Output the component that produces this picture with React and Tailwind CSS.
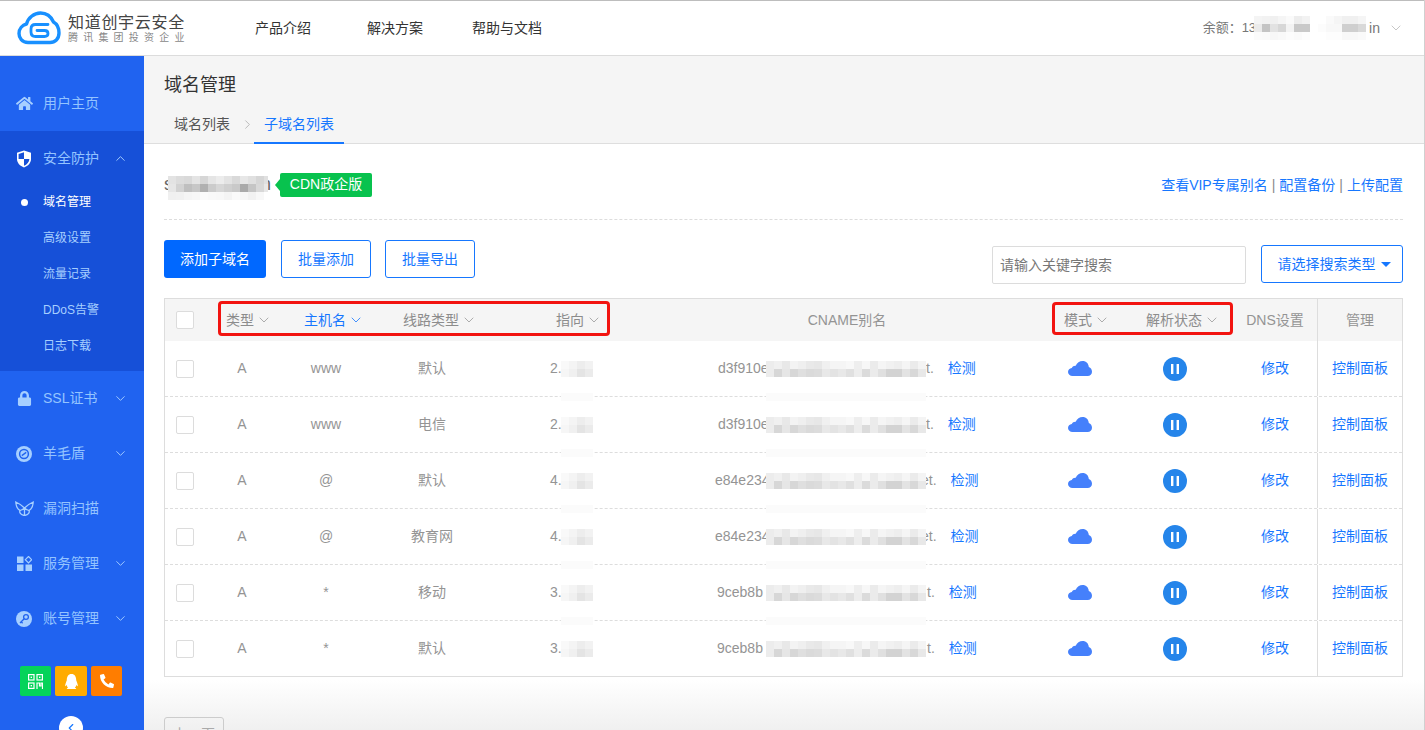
import { FaHome, FaLock, FaQq, FaPhoneAlt } from 'react-icons/fa';
import { ChevronDown, ChevronUp, ChevronLeft, ChevronRight } from 'lucide-react';

const font = { fontFamily: '"Liberation Sans", "Noto Sans CJK SC", sans-serif' };

const Logo = () => (
  <svg width="44" height="34" viewBox="0 0 44 34" fill="none" stroke="#1890ff" strokeWidth="3.4" strokeLinejoin="round" strokeLinecap="round">
    <path d="M11 31.5C5 31.5 2 27 2 22.5C2 17.5 5.5 14 9.5 13C11 7 17 2 23.5 2C30 2 34.5 6.5 36.5 11C40 13 42 17 42 22C42 28 38 31.5 33 31.5Z" />
    <path d="M31 13.5H18.5Q14 13.5 14 18V21Q14 25.5 18.5 25.5H27.5Q31 25.5 31 22.5Q31 19.5 27.5 19.5H20" strokeWidth="2.8" />
  </svg>
);

const Shield = () => (
  <svg width="16" height="18" viewBox="0 0 16 18">
    <path d="M8 0.5L15 2.8V9C15 13 12 16 8 17.5C4 16 1 13 1 9V2.8Z" fill="#ffffff" />
    <path d="M8 2.2V9H2.6V3.9ZM8 9H13.4C13.2 12 11 14.6 8 15.8Z" fill="#1650d8" />
  </svg>
);

const WoolShield = () => (
  <svg width="16" height="16" viewBox="0 0 16 16">
    <circle cx="8" cy="8" r="8" fill="#a6cfff" />
    <circle cx="8" cy="8" r="4.4" fill="none" stroke="#2063f0" strokeWidth="1.5" />
    <path d="M5.8 9.6L10.2 6.4" stroke="#2063f0" strokeWidth="1.3" />
  </svg>
);

const Wings = () => (
  <svg width="19" height="15" viewBox="0 0 19 15" fill="none" stroke="#a6cfff" strokeWidth="1.3">
    <path d="M0.8 1C3.5 2.2 6.5 4 9.5 7C12.5 4 15.5 2.2 18.2 1C18 5 16.5 8 14 9.5C15 11.5 13 14 9.5 14.5C6 14 4 11.5 5 9.5C2.5 8 1 5 0.8 1Z" />
    <path d="M5 9.5C7 8.8 8.5 8.2 9.5 7C10.5 8.2 12 8.8 14 9.5M9.5 7V14.5" />
  </svg>
);

const Apps = () => (
  <svg width="15" height="15" viewBox="0 0 15 15" fill="#a6cfff">
    <rect x="0" y="0.5" width="6.5" height="6.5" />
    <rect x="0" y="8.5" width="6.5" height="6.5" />
    <rect x="8.5" y="8.5" width="6.5" height="6.5" />
    <path d="M11.5 0.5L14.7 3.7L11.5 6.9L8.3 3.7Z" fill="none" stroke="#a6cfff" strokeWidth="1.2" />
  </svg>
);

const KeyIcon = () => (
  <svg width="16" height="16" viewBox="0 0 16 16">
    <circle cx="8" cy="8" r="8" fill="#a6cfff" />
    <circle cx="10" cy="6" r="2.4" fill="none" stroke="#2063f0" strokeWidth="1.3" />
    <path d="M8.2 7.8L4 12M5.2 10.8L6.6 12.2" stroke="#2063f0" strokeWidth="1.3" />
  </svg>
);

const QrIcon = () => (
  <svg width="15" height="15" viewBox="0 0 15 15" fill="none" stroke="#fff" strokeWidth="1.2">
    <rect x="0.6" y="0.6" width="5.4" height="5.4" />
    <rect x="9" y="0.6" width="5.4" height="5.4" />
    <rect x="0.6" y="9" width="5.4" height="5.4" />
    <path d="M9 15V9H11.5V12H13V9H14.5V15" />
    <rect x="2.6" y="2.6" width="1.4" height="1.4" fill="#fff" stroke="none" />
    <rect x="11" y="2.6" width="1.4" height="1.4" fill="#fff" stroke="none" />
    <rect x="2.6" y="11" width="1.4" height="1.4" fill="#fff" stroke="none" />
  </svg>
);

const Cloud = () => (
  <svg width="24" height="15" viewBox="0 0 24 15" fill="#4580fb">
    <path d="M4.5 15C2 15 0 13.3 0 11C0 8.8 1.6 7.2 3.8 7C4.6 5.3 6.1 4.6 7.7 4.8C9 2 11.6 0 14.6 0C18.2 0 20.6 2.6 20.8 6C22.8 6.8 24 8.6 24 10.8C24 13.2 22.2 15 19.6 15Z" />
  </svg>
);

const Pause = () => (
  <svg width="24" height="24" viewBox="0 0 24 24">
    <circle cx="12" cy="12" r="12" fill="#2585ea" />
    <rect x="8" y="7" width="2.4" height="10" fill="#fff" />
    <rect x="13.6" y="7" width="2.4" height="10" fill="#fff" />
  </svg>
);

// pixelated patch that hides a value in the screenshot
const Mosaic = ({ rows, width, faint }) => (
  <span className="relative inline-block align-middle" style={{ width }}>
    {rows.map((row, i) => (
      <span key={i} className="flex h-[8px] overflow-hidden">
        {row.map((c, j) => (
          <span key={j} className="h-[8px] w-[8px] shrink-0" style={{ backgroundColor: c }} />
        ))}
      </span>
    ))}
    {faint && <span className="absolute left-0 right-0 top-[32px] h-[8px] bg-[#fbfbfb]" />}
  </span>
);

const cnameRows = [
  ['#ececec','#f0f0f0','#e8e8e8','#f3f3f3','#efefef','#e9e9e9','#e7e7e7','#f0f0f0','#f5f5f5','#f5f5f5','#f8f8f8','#eeeeee','#f7f7f7','#ebebeb','#f5f5f5','#f1f1f1','#eeeeee','#f5f5f5','#ebebeb','#f4f4f4'],
  ['#ececec','#d7d7d7','#e6e6e6','#d7d7d7','#dfdfdf','#dadada','#dcdcdc','#e8e8e8','#e3e3e3','#e8e8e8','#e0e0e0','#ededed','#dbdbdb','#ebebeb','#e0e0e0','#d3d3d3','#d3d3d3','#e3e3e3','#d8d8d8','#e8e8e8'],
];
const ipRows = [
  ['#f9f9f9','#f4f4f4','#ededed','#f2f2f2'],
  ['#f6f6f6','#f0f0f0','#e4e4e4','#ebebeb'],
];
const domainRows = [
  ['#e3e3e3','#dcdcdc','#d9d9d9','#e4e4e4','#d6d6d6','#e5e5e5','#ececec','#e3e3e3','#d9d9d9','#e7e7e7','#e0e0e0','#d6d6d6','#e0e0e0'],
  ['#e6e6e6','#d2d2d2','#bfbfbf','#c7c7c7','#b0b0b0','#cbcbcb','#d6d6d6','#cfcfcf','#c9c9c9','#aaaaaa','#c5c5c5','#d8d8d8','#e8e8e8'],
  ['#f0f0f0','#f1f1f1','#f5f5f5','#f7f7f7','#fbfbfb','#f9f9f9','#f8f8f8','#f4f4f4','#fafafa','#f7f7f7','#f2f2f2','#f8f8f8','#ffffff'],
];
const balanceRows = [
  ['#f4f4f4','#f2f2f2','#f0f0f0','#f5f5f5','#fafafa','#ededed','#f2f2f2','#ffffff','#ffffff','#fafafa','#f5f5f5','#f0f0f0','#f0f0f0','#f5f5f5'],
  ['#ebebeb','#c4c4c4','#e2e2e2','#d7d7d7','#f3f3f3','#c9c9c9','#c9c9c9','#ffffff','#fcfcfc','#f8f8f8','#f8f8f8','#cfcfcf','#cfcfcf','#d9d9d9'],
  ['#fbfbfb','#fafafa','#f7f7f7','#f9f9f9','#fcfcfc','#fafafa','#fdfdfd','#ffffff','#ffffff','#fdfdfd','#fdfdfd','#f8f8f8','#f8f8f8','#fafafa'],
];

const groups = [
  { icon: <FaLock size={15} />, label: 'SSL证书', arrow: true },
  { icon: <WoolShield />, label: '羊毛盾', arrow: true },
  { icon: <Wings />, label: '漏洞扫描' },
  { icon: <Apps />, label: '服务管理', arrow: true },
  { icon: <KeyIcon />, label: '账号管理', arrow: true },
];

const subMenu = ['域名管理', '高级设置', '流量记录', 'DDoS告警', '日志下载'];

const rows = [
  { host: 'www', line: '默认', ip: '2.', prefix: 'd3f910e', pre: 'pl-[58px]', preW: 'w-[48px]', suffix: 't.', post: '' },
  { host: 'www', line: '电信', ip: '2.', prefix: 'd3f910e', pre: 'pl-[58px]', preW: 'w-[48px]', suffix: 't.', post: '' },
  { host: '@', line: '默认', ip: '4.', prefix: 'e84e234', pre: 'pl-[55px]', preW: 'w-[51px]', suffix: 'et.', post: '-ml-[5px]' },
  { host: '@', line: '教育网', ip: '4.', prefix: 'e84e234', pre: 'pl-[55px]', preW: 'w-[51px]', suffix: 'et.', post: '-ml-[5px]' },
  { host: '*', line: '移动', ip: '3.', prefix: '9ceb8b', pre: 'pl-[57px]', preW: 'w-[49px]', suffix: 't.', post: 'ml-[1px]' },
  { host: '*', line: '默认', ip: '3.', prefix: '9ceb8b', pre: 'pl-[57px]', preW: 'w-[49px]', suffix: 't.', post: 'ml-[1px]' },
];

const gridCols = 'grid grid-cols-[51px_52px_116px_96px_180px_374px_92px_107px_84px_85px]';

const Box = () => <span className="block h-[18px] w-[18px] rounded-[2px] border border-[#dcdcdc] bg-white" />;

const SortLabel = ({ children, active, className }) => (
  <div className={`flex items-center whitespace-nowrap text-[14px] ${active ? 'text-[#1677ff]' : 'text-[#8c8c8c]'} ${className}`}>
    <span>{children}</span>
    <ChevronDown size={16} strokeWidth={1.2} className={`ml-[2px] shrink-0 ${active ? 'text-[#1677ff]' : 'text-[#999]'}`} />
  </div>
);

const NavItem = ({ icon, label, arrow }) => (
  <div className="flex h-[55px] items-center text-[14px] text-[#94c4ff]">
    <span className="flex w-[43px] shrink-0 justify-center pl-[7px] pr-[2px] text-[#a6cfff]">{icon}</span>
    <span className="w-[66px]">{label}</span>
    {arrow && <ChevronDown size={15} strokeWidth={1.5} className="ml-[4px] text-[#a6cfff]" />}
  </div>
);

export default function App() {
  return (
    <div className="relative flex h-[730px] w-[1425px] flex-col overflow-hidden border-r border-[#d0d0d0] bg-white" style={font}>
      <header className="flex h-[56px] shrink-0 items-center border-b border-t border-b-[#dcdcdc] border-t-[#bdbdbd] bg-white">
        <div className="ml-[17px] flex w-[238px] items-center">
          <Logo />
          <div className="ml-[7px] flex flex-col">
            <span className="text-[16px] leading-[18px] tracking-[0.7px] text-[#444]">知道创宇云安全</span>
            <span className="text-[10px] leading-[11px] tracking-[5.2px] whitespace-nowrap text-[#888]">腾讯集团投资企业</span>
          </div>
        </div>
        <nav className="flex text-[14px] text-[#333]">
          <a className="w-[112px]">产品介绍</a>
          <a className="w-[105px]">解决方案</a>
          <a>帮助与文档</a>
        </nav>
        <div className="ml-auto flex items-center pr-[20px] text-[13px] text-[#777]">
          <span>余额：13</span>
          <span className="-ml-[2px]"><Mosaic rows={balanceRows} width={112} /></span>
          <span className="relative ml-[3px] text-[14px]">in</span>
          <ChevronDown size={16} strokeWidth={1} className="ml-[8px] text-[#aaa]" />
        </div>
      </header>

      <div className="flex min-h-0 flex-1">
        <aside className="w-[144px] shrink-0 overflow-hidden bg-[#2063f0]">
          <div className="pt-[20px]">
            <NavItem icon={<FaHome size={17} />} label="用户主页" />
          </div>
          <div className="h-[240px] bg-[#1650d8]">
            <div className="flex h-[53px] items-center pt-[2px] text-[14px] text-[#94c4ff]">
              <span className="flex w-[43px] shrink-0 justify-center pl-[7px] pr-[2px]"><Shield /></span>
              <span className="w-[66px]">安全防护</span>
              <ChevronUp size={15} strokeWidth={1.5} className="ml-[4px] text-[#a6cfff]" />
            </div>
            {subMenu.map((item, i) => (
              <div key={item} className={`flex h-[36px] items-center text-[12px] ${i === 0 ? 'text-white' : 'text-[#a6cfff]'}`}>
                <span className="flex w-[43px] justify-center pl-[5px]">
                  {i === 0 && <span className="h-[7px] w-[7px] rounded-full bg-white" />}
                </span>
                {item}
              </div>
            ))}
          </div>
          {groups.map((g) => (
            <NavItem key={g.label} {...g} />
          ))}
          <div className="mt-[20px] flex pl-[20px]">
            <span className="flex h-[30px] w-[31px] items-center justify-center rounded-[2px] bg-[#05d35a]"><QrIcon /></span>
            <span className="ml-[4px] flex h-[30px] w-[32px] items-center justify-center rounded-[2px] bg-[#ffab00] text-white"><FaQq size={15} /></span>
            <span className="ml-[4px] flex h-[30px] w-[31px] items-center justify-center rounded-[2px] bg-[#ff7d00] text-white"><FaPhoneAlt size={14} /></span>
          </div>
          <div className="mt-[20px] flex justify-center pr-[2px]">
            <span className="flex h-[24px] w-[24px] items-center justify-center rounded-full bg-white text-[#1677ff]"><ChevronLeft size={14} /></span>
          </div>
        </aside>

        <main className="relative min-w-0 flex-1 overflow-hidden">
          <div className="h-[88px] border-b border-[#dedede] bg-[#f5f5f5] pl-[20px]">
            <h1 className="pt-[17px] text-[18px] leading-[24px] text-[#333]">域名管理</h1>
            <div className="mt-[13px] flex h-[34px] text-[14px]">
              <span className="ml-[10px] flex h-[34px] items-center pb-[6px] text-[#555]">域名列表</span>
              <span className="ml-[10px] flex h-[34px] items-center pb-[6px]"><ChevronRight size={15} strokeWidth={1} className="text-[#999]" /></span>
              <span className="relative ml-[-1px] flex h-[34px] w-[90px] items-center justify-center pb-[6px] text-[#1677ff]">
                子域名列表
                <span className="absolute bottom-0 left-0 h-[2px] w-full bg-[#1677ff]" />
              </span>
            </div>
          </div>

          <div className="px-[20px] pr-[21px]">
            <div className="flex h-[76px] items-center border-b border-dashed border-[#dddddd] pt-[6px]">
              <span className="text-[18px] text-[#666]">s</span>
              <span className="relative z-10 -ml-[5px] mt-[6px] w-[100px] overflow-hidden"><Mosaic rows={domainRows} width={104} /></span>
              <span className="-ml-[7px] text-[18px] text-[#666]">n</span>
              <span className="ml-[4px] h-0 w-0 border-b-[6px] border-r-[5px] border-t-[6px] border-b-transparent border-r-[#08c24e] border-t-transparent" />
              <span className="flex h-[24px] w-[92px] items-center justify-center rounded-[2px] bg-[#08c24e] text-[14px] text-white">CDN政企版</span>
              <div className="ml-auto mt-[1px] text-[14px] text-[#1677ff]">
                查看VIP专属别名<span className="mx-[4px] text-[#888]">|</span>配置备份<span className="mx-[4px] text-[#888]">|</span>上传配置
              </div>
            </div>

            <div className="mt-[20px] flex items-start text-[14px]">
              <button className="h-[38px] w-[102px] rounded-[3px] bg-[#0068ff] text-white">添加子域名</button>
              <button className="ml-[15px] h-[38px] w-[90px] rounded-[3px] border border-[#1677ff] text-[#1677ff]">批量添加</button>
              <button className="ml-[14px] h-[38px] w-[90px] rounded-[3px] border border-[#1677ff] text-[#1677ff]">批量导出</button>
              <input
                className="ml-auto mt-[6px] h-[38px] w-[254px] rounded-[2px] border border-[#dcdcdc] px-[7px] text-[14px] outline-none placeholder:text-[#777]"
                placeholder="请输入关键字搜索"
              />
              <button className="ml-[15px] mt-[5px] flex h-[38px] w-[142px] items-center justify-center rounded-[3px] border border-[#1677ff] pl-[4px] text-[#1677ff]">
                请选择搜索类型
                <span className="ml-[5px] h-0 w-0 border-l-[5px] border-r-[5px] border-t-[5px] border-l-transparent border-r-transparent border-t-[#1677ff]" />
              </button>
            </div>

            <div className="mt-[14px] border border-[#dddddd] text-[14px] text-[#949494]">
              <div className={`relative h-[42px] items-center bg-[#f5f5f5] ${gridCols}`}>
                <div className="pl-[11px]"><Box /></div>
                <SortLabel className="pl-[10px]">类型</SortLabel>
                <SortLabel active className="pl-[36px]">主机名</SortLabel>
                <SortLabel className="pl-[19px]">线路类型</SortLabel>
                <SortLabel className="pl-[76px]">指向</SortLabel>
                <div className="text-center">CNAME别名</div>
                <SortLabel className="pl-[30px]">模式</SortLabel>
                <SortLabel className="pl-[20px]">解析状态</SortLabel>
                <div className="text-center">DNS设置</div>
                <div className="flex h-full items-center justify-center border-l border-[#dddddd]">管理</div>
                <span className="absolute left-[53px] top-[2px] h-[35px] w-[392px] rounded-[4px] border-[3px] border-[#f21410]" />
                <span className="absolute left-[887px] top-[3px] h-[33px] w-[181px] rounded-[4px] border-[3px] border-[#f21410]" />
              </div>
              {rows.map((r, i) => (
                <div
                  key={i}
                  className={`items-center ${gridCols} ${i === rows.length - 1 ? 'h-[55px]' : 'h-[56px] border-b border-dashed border-[#dddddd]'}`}
                >
                  <div className="pl-[11px]"><Box /></div>
                  <div className="text-center">A</div>
                  <div className="text-center">{r.host}</div>
                  <div className="text-center">{r.line}</div>
                  <div className="flex items-center pl-[70px]">
                    <span>{r.ip}</span>
                    <span className="-ml-[1px]"><Mosaic rows={ipRows} width={32} faint={i < 5} /></span>
                  </div>
                  <div className={`flex items-center whitespace-nowrap ${r.pre}`}>
                    <span className={`shrink-0 overflow-visible ${r.preW}`}>{r.prefix}</span>
                    <span className="relative z-10"><Mosaic rows={cnameRows} width={160} faint={i < 5} /></span>
                    <span className={r.post}>{r.suffix}</span>
                    <a className="ml-[14px] text-[#1677ff]">检测</a>
                  </div>
                  <div className="flex justify-center"><Cloud /></div>
                  <div className="flex justify-center pr-[9px]"><Pause /></div>
                  <div className="text-center text-[#1677ff]">修改</div>
                  <div className="flex h-full items-center justify-center border-l border-[#dddddd] text-[#1677ff]">控制面板</div>
                </div>
              ))}
            </div>

            <button className="relative z-10 mt-[40px] h-[34px] w-[60px] rounded-[3px] border border-[#cccccc] text-[14px] text-[#aaa]">上一页</button>
          </div>
          <div className="pointer-events-none absolute bottom-0 left-0 right-0 h-[50px] bg-gradient-to-b from-transparent to-[#f0f0f0]" />
        </main>
      </div>
    </div>
  );
}
